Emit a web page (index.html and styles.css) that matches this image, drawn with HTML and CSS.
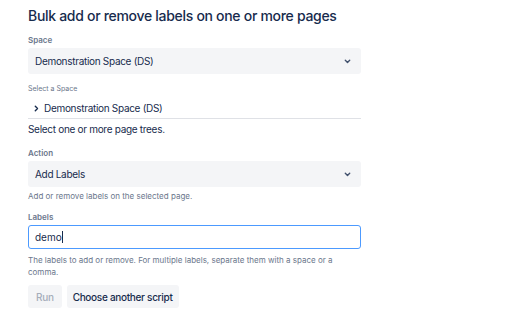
FILE: index.html
```html
<!DOCTYPE html>
<html>
<head>
  <meta charset="utf-8">
  <title>Bulk add or remove labels</title>
  <link rel="stylesheet" href="styles.css">
</head>
<body>
  <div class="form">
    <h1 class="form-title">Bulk add or remove labels on one or more pages</h1>

    <label class="field-label">Space</label>
    <div class="select">
      <span>Demonstration Space (DS)</span>
      <svg class="chevron" width="7" height="5" viewBox="0 0 7 5"><path d="M1.3 1.3 L3.5 3.5 L5.7 1.3" fill="none" stroke="#42526E" stroke-width="1.4" stroke-linecap="round" stroke-linejoin="round"/></svg>
    </div>

    <div class="tree">
      <div class="tree-label">Select a Space</div>
      <div class="tree-item">
        <svg class="tree-arrow" width="5" height="7" viewBox="0 0 5 7"><path d="M1.3 1.2 L3.5 3.5 L1.3 5.8" fill="none" stroke="#172B4D" stroke-width="1.4" stroke-linecap="round" stroke-linejoin="round"/></svg>
        <span>Demonstration Space (DS)</span>
      </div>
    </div>
    <div class="tree-help">Select one or more page trees.</div>

    <label class="field-label">Action</label>
    <div class="select">
      <span>Add Labels</span>
      <svg class="chevron" width="7" height="5" viewBox="0 0 7 5"><path d="M1.3 1.3 L3.5 3.5 L5.7 1.3" fill="none" stroke="#42526E" stroke-width="1.4" stroke-linecap="round" stroke-linejoin="round"/></svg>
    </div>
    <div class="help">Add or remove labels on the selected page.</div>

    <label class="field-label">Labels</label>
    <div class="input"><span>demo</span><span class="caret"></span></div>
    <div class="help help-last">The labels to add or remove. For multiple labels, separate them with a space or a comma.</div>

    <div class="buttons">
      <button class="btn btn-disabled">Run</button>
      <button class="btn">Choose another script</button>
    </div>
  </div>
</body>
</html>
```

FILE: styles.css
```css
/* basic style */
body {
  margin: 0;
  background: #fff;
  font-family: Inter, "Noto Sans", sans-serif;
  color: #172B4D;
}

.form {
  width: 333px;
  padding: 6px 0 0 28px;
}

.form-title {
  font-size: 14px;
  font-weight: 500;
  margin: 0 0 9px 0;
  line-height: 20px;
  letter-spacing: -0.3px;
  white-space: nowrap;
}

.field-label {
  display: block;
  font-size: 8px;
  font-weight: 600;
  color: #6B778C;
  line-height: 10px;
  margin-bottom: 3px;
}

/* select boxes */
.select {
  height: 26px;
  background: #F4F5F7;
  border-radius: 3px;
  display: flex;
  align-items: center;
  justify-content: space-between;
  padding: 0 10px 0 7px;
  font-size: 10px;
  letter-spacing: -0.3px;
}

.chevron {
  display: block;
}

/* page tree */
.tree {
  border-bottom: 1px solid #DFE1E6;
  padding-top: 10px;
  padding-bottom: 3px;
}

.tree-label {
  font-size: 7px;
  color: #6B778C;
  line-height: 9px;
  margin-bottom: 8px;
}

.tree-item {
  display: flex;
  align-items: center;
  gap: 5px;
  font-size: 10px;
  letter-spacing: -0.3px;
  line-height: 14px;
  padding-left: 6px;
}

.tree-help {
  font-size: 10px;
  letter-spacing: -0.3px;
  line-height: 14px;
  margin: 3px 0 12px 0;
}

.help {
  font-size: 8px;
  color: #6B778C;
  line-height: 12px;
  margin: 3px 0 10px 0;
}

.help-last {
  margin: 5px 0 7px 0;
}

/* text input */
.input {
  height: 22px;
  border: 1.5px solid #4C9AFF;
  border-radius: 3px;
  display: flex;
  align-items: center;
  padding: 0 6px;
  font-size: 10px;
}

.caret {
  display: inline-block;
  width: 1px;
  height: 12px;
  background: #172B4D;
}

/* buttons */
.buttons {
  display: flex;
  gap: 5px;
}

.btn {
  font-family: inherit;
  font-size: 10px;
  font-weight: 500;
  letter-spacing: -0.3px;
  height: 23px;
  border: 0;
  border-radius: 3px;
  background: #F4F5F7;
  color: #172B4D;
  padding: 0 6px;
}

.btn-disabled {
  color: #A5ADBA;
  padding: 0 8px;
}
```
